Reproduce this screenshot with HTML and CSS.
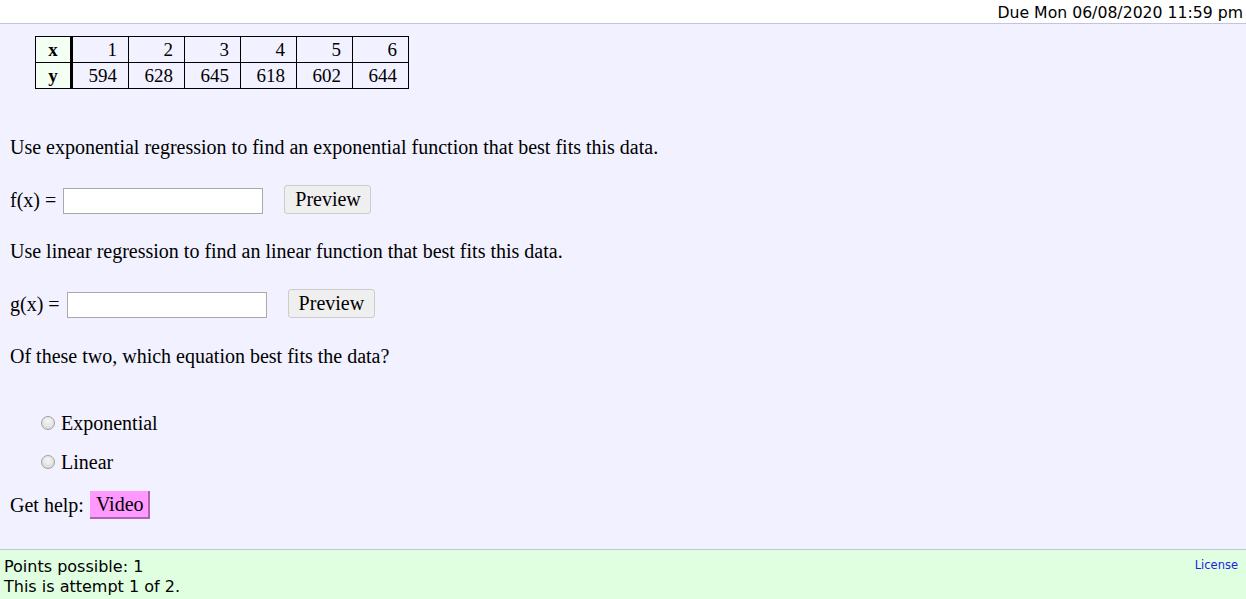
FILE: index.html
```html
<!DOCTYPE html>
<html>
<head>
<meta charset="utf-8">
<link rel="stylesheet" href="styles.css">
</head>
<body>
<div class="topbar"><span class="due">Due Mon 06/08/2020 11:59 pm</span></div>
<div class="question">
  <table class="data">
    <tr><th>x</th><td>1</td><td>2</td><td>3</td><td>4</td><td>5</td><td>6</td></tr>
    <tr><th>y</th><td>594</td><td>628</td><td>645</td><td>618</td><td>602</td><td>644</td></tr>
  </table>
  <p class="p1">Use exponential regression to find an exponential function that best fits this data.</p>
  <div class="answer"><span>f(x) =</span><input class="field" type="text"><button class="preview">Preview</button></div>
  <p class="p2">Use linear regression to find an linear function that best fits this data.</p>
  <div class="answer a2"><span>g(x) =</span><input class="field" type="text"><button class="preview">Preview</button></div>
  <p class="p3">Of these two, which equation best fits the data?</p>
  <ul class="choices">
    <li><span class="radio"></span>Exponential</li>
    <li><span class="radio"></span>Linear</li>
  </ul>
  <div class="help">Get help: <span class="video">Video</span></div>
</div>
<div class="footer">
  <div class="info">
    <div>Points possible: 1</div>
    <div>This is attempt 1 of 2.</div>
  </div>
  <a class="license">License</a>
</div>
</body>
</html>
```

FILE: styles.css
```css
html, body { margin: 0; padding: 0; }
body { background: #fff; font-family: "Liberation Serif", "Times New Roman", serif; color: #000; }
.topbar {
  height: 23px;
  border-bottom: 1px solid #c4c4d8;
  display: flex;
  justify-content: flex-end;
  align-items: flex-end;
  padding-right: 3px;
  font-family: "DejaVu Sans", Tahoma, sans-serif;
  font-size: 15.7px;
}
.due { line-height: 20px; }
.question {
  background: #f1f1ff;
  height: 525px;
  padding: 12px 10px 0 10px;
  box-sizing: border-box;
  font-size: 20px;
}
.data {
  border-collapse: collapse;
  margin-left: 25px;
  font-size: 19px;
}
.data th, .data td {
  border: 1px solid #000;
  height: 25px;
  line-height: 24px;
}
.data th { background: #f4fff4; width: 20px; border-right: 3px solid #000; text-align: center; padding: 0 7px; }
.data td { width: 40px; text-align: right; padding: 0 11px 0 4px; }
p { margin: 0; }
.p1 { margin-top: 46px; line-height: 24px; }
.answer { display: flex; align-items: center; margin-top: 26px; height: 30px; }
.a2 { margin-top: 26px; }
.field {
  margin: 0 21px 0 7px;
  width: 200px; height: 26px; box-sizing: border-box;
  border: 1px solid #a9a9a9; background: #fff;
  position: relative; top: 1px;
}
.preview {
  font-family: "Liberation Serif", serif; font-size: 20px;
  background: #efefef; border: 1px solid #ccc; border-radius: 3px;
  height: 29px; padding: 0 10px; width: 87px;
  color: #000;
  position: relative; top: -1px;
}
.p2 { margin-top: 24px; line-height: 24px; }
.p3 { margin-top: 25px; line-height: 24px; }
.choices { list-style: none; margin: 42px 0 0 0; padding: 0 0 0 30px; }
.choices li { display: flex; align-items: center; height: 26px; margin-bottom: 13px; }
.choices li:last-child { margin-bottom: 0; }
.radio {
  width: 14px; height: 14px; border-radius: 50%;
  box-sizing: border-box;
  border: 1px solid #a0a0a0;
  background: radial-gradient(circle at 50% 35%, #f6f6f6 0%, #e2e2e2 60%, #cfcfcf 100%);
  margin-right: 6px;
  margin-left: 1px;
}
.help { display: flex; align-items: center; margin-top: 15px; height: 30px; }
.video {
  display: inline-block; margin-left: 6px;
  background: #ff99ff; padding: 0 4px 0 6px;
  line-height: 26px;
  border-right: 2px solid #b060b0; border-bottom: 2px solid #b060b0;
}
.footer {
  border-top: 1px solid #c4c4d8;
  background: #e0ffe0;
  height: 50px;
  display: flex; justify-content: space-between;
  padding: 7px 8px 0 4px;
  box-sizing: border-box;
  font-family: "DejaVu Sans", Tahoma, sans-serif;
  font-size: 16px;
}
.info { line-height: 20px; }
.license { color: #2020e0; font-size: 11.5px; line-height: 16px; }
```
